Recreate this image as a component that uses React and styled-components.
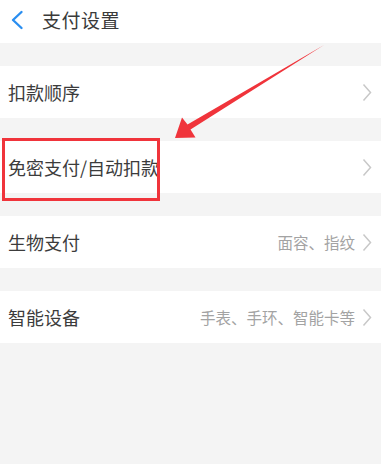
import React from 'react';
import styled, { createGlobalStyle } from 'styled-components';

const FONT = '"Noto Sans CJK SC", "Noto Sans", sans-serif';

const GlobalStyle = createGlobalStyle`
  body {
    margin: 0;
    background: #f4f4f4;
    font-family: ${FONT};
  }
`;

const Page = styled.div`
  position: relative;
  width: 381px;
  min-height: 464px;
  background: #f4f4f4;
  overflow: hidden;
`;

const Header = styled.header`
  display: flex;
  align-items: center;
  height: 43px;
  padding: 0 0 4px 10px;
  box-sizing: border-box;
  background: #fff;
`;

const Title = styled.h1`
  margin: 0 0 0 18px;
  font-size: 19px;
  font-weight: 400;
  color: #3a3a3a;
  letter-spacing: 0.5px;
`;

const Row = styled.div`
  display: flex;
  align-items: center;
  justify-content: space-between;
  height: 52px;
  margin-top: 23px;
  padding: 0 9px 0 8px;
  background: #fff;
`;

const Label = styled.span`
  font-size: 18px;
  color: #3c3c3c;
`;

const Side = styled.div`
  display: flex;
  align-items: center;
  gap: 7px;
`;

const Detail = styled.span`
  font-size: 15.5px;
  color: #a3a3a3;
`;

const Overlay = styled.svg`
  position: absolute;
  left: 0;
  top: 0;
  pointer-events: none;
`;

const BackIcon = () => (
  <svg width="14" height="20" viewBox="0 0 14 20">
    <polyline points="11.5,2 3,10 11.5,18" fill="none" stroke="#2a8ef0" strokeWidth="2.4" strokeLinecap="round" strokeLinejoin="round" />
  </svg>
);

const Chevron = () => (
  <svg width="10" height="19" viewBox="0 0 10 19">
    <polyline points="1.5,1.5 8.5,9.5 1.5,17.5" fill="none" stroke="#c8c8c8" strokeWidth="1.5" />
  </svg>
);

const rows = [
  { label: '扣款顺序' },
  { label: '免密支付/自动扣款' },
  { label: '生物支付', detail: '面容、指纹' },
  { label: '智能设备', detail: '手表、手环、智能卡等' },
];

export default function App() {
  return (
    <Page>
      <GlobalStyle />
      <Header>
        <BackIcon />
        <Title>支付设置</Title>
      </Header>
      {rows.map((r) => (
        <Row key={r.label}>
          <Label>{r.label}</Label>
          <Side>
            {r.detail && <Detail>{r.detail}</Detail>}
            <Chevron />
          </Side>
        </Row>
      ))}
      <Overlay width="381" height="464" viewBox="0 0 381 464">
        <rect x="3.5" y="139.5" width="155" height="60" fill="none" stroke="#f0343b" strokeWidth="3" />
        <polygon
          points="324,45 190.5,129.5 195.5,137.5 175,138 182,117.5 187.5,124.5"
          fill="#f0343b"
        />
      </Overlay>
    </Page>
  );
}
